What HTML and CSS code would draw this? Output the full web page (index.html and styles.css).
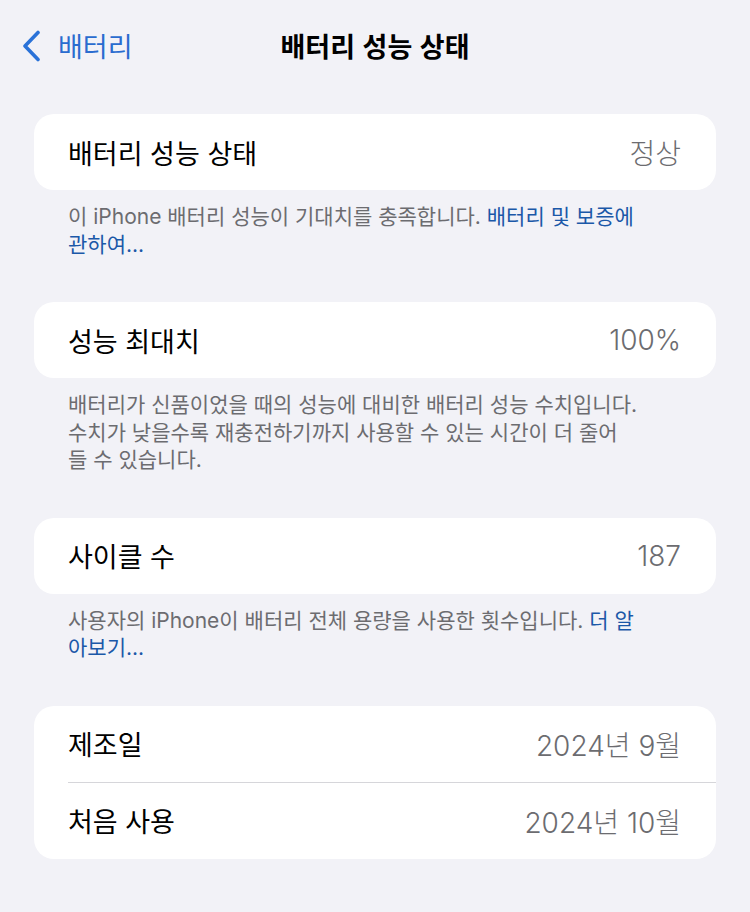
FILE: index.html
```html
<!DOCTYPE html>
<html lang="ko">
<head>
<meta charset="utf-8">
<title>배터리 성능 상태</title>
<link rel="stylesheet" href="styles.css">
</head>
<body>
<div class="page">
  <header class="nav">
    <a class="back" href="#">
      <svg class="chev" width="20" height="32" viewBox="0 0 20 32" aria-hidden="true">
        <polyline points="17,2.5 4,16 17,29.5" fill="none" stroke="#2a72d8" stroke-width="3.6" stroke-linecap="round" stroke-linejoin="round"/>
      </svg>
      <span class="back-text">배터리</span>
    </a>
    <h1 class="title">배터리 성능 상태</h1>
  </header>

  <main class="content">
    <section class="card">
      <div class="row"><span class="label">배터리 성능 상태</span><span class="value">정상</span></div>
    </section>
    <p class="foot">이 iPhone 배터리 성능이 기대치를 충족합니다. <a class="link" href="#">배터리 및 보증에<br>관하여...</a></p>

    <section class="card">
      <div class="row"><span class="label">성능 최대치</span><span class="value">100%</span></div>
    </section>
    <p class="foot">배터리가 신품이었을 때의 성능에 대비한 배터리 성능 수치입니다.<br>수치가 낮을수록 재충전하기까지 사용할 수 있는 시간이 더 줄어<br>들 수 있습니다.</p>

    <section class="card">
      <div class="row"><span class="label">사이클 수</span><span class="value">187</span></div>
    </section>
    <p class="foot">사용자의 iPhone이 배터리 전체 용량을 사용한 횟수입니다. <a class="link" href="#">더 알<br>아보기...</a></p>

    <section class="card">
      <div class="row"><span class="label">제조일</span><span class="value">2024년 9월</span></div>
      <div class="row"><span class="label">처음 사용</span><span class="value">2024년 10월</span></div>
    </section>
  </main>
</div>
</body>
</html>
```

FILE: styles.css
```css
html, body {
  margin: 0;
  padding: 0;
  background: #f2f2f7;
}
body {
  font-family: "Inter", "Noto Sans CJK KR", sans-serif;
  color: #000;
  -webkit-font-smoothing: antialiased;
}
.page {
  width: 750px;
  min-height: 912px;
}
.nav {
  height: 92px;
  display: flex;
  align-items: center;
  justify-content: center;
  position: relative;
}
.back {
  position: absolute;
  left: 21px;
  top: 30px;
  display: flex;
  align-items: center;
  gap: 17px;
  text-decoration: none;
  color: #2a6ccf;
}
.chev {
  display: block;
}
.back-text {
  font-size: 27px;
  line-height: 32px;
  font-family: "Noto Sans CJK KR", sans-serif;
}
.title {
  margin: 0;
  font-size: 27px;
  font-weight: 700;
  font-family: "Noto Sans CJK KR", sans-serif;
  line-height: 32px;
}
.content {
  padding: 22px 34px 0;
}
.card {
  background: #fff;
  border-radius: 20px;
  overflow: hidden;
}
.row {
  height: 76px;
  padding: 0 35px 0 34px;
  display: flex;
  align-items: center;
  justify-content: space-between;
  font-size: 27px;
}
.row + .row {
  border-top: 1px solid #d6d6da;
  margin-left: 34px;
  padding-left: 0;
}
.label {
  color: #000;
}
.value {
  color: #6c6c70;
  font-size: 28px;
  font-weight: 300;
}
.foot {
  margin: 0 0 44px;
  padding: 13px 34px 0;
  font-size: 21px;
  line-height: 27.5px;
  color: #6c6c70;
}
.link {
  color: #1b58a8;
  text-decoration: none;
}
```
